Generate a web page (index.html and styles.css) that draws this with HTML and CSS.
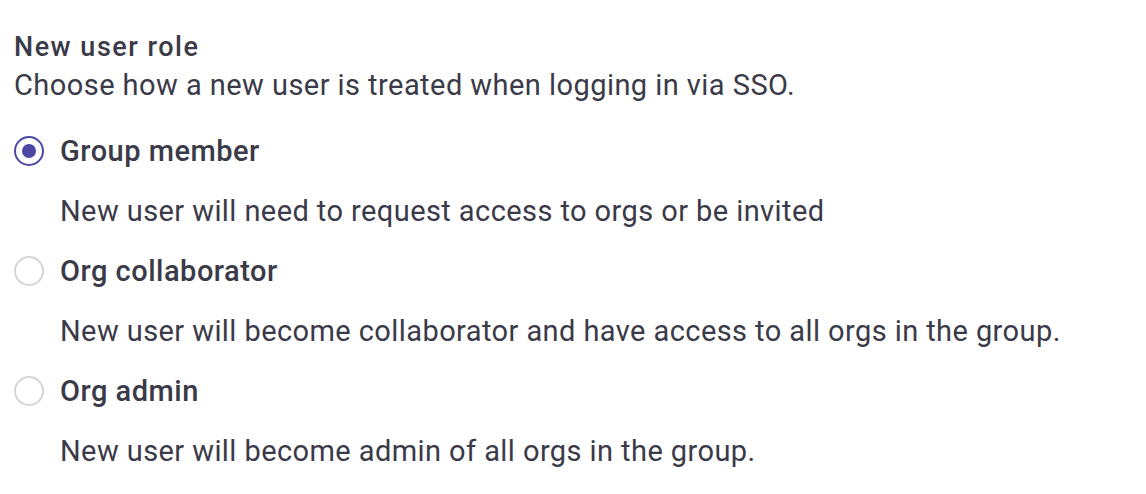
FILE: index.html
```html
<!DOCTYPE html>
<html>
<head>
<meta charset="utf-8">
<link rel="stylesheet" href="styles.css">
</head>
<body>
<div class="field">
  <div class="title">New user role</div>
  <div class="subtitle">Choose how a new user is treated when logging in via SSO.</div>
  <div class="options">
    <div class="option">
      <div class="row"><span class="radio checked"></span><span class="label">Group member</span></div>
      <div class="desc">New user will need to request access to orgs or be invited</div>
    </div>
    <div class="option">
      <div class="row"><span class="radio"></span><span class="label">Org collaborator</span></div>
      <div class="desc">New user will become collaborator and have access to all orgs in the group.</div>
    </div>
    <div class="option">
      <div class="row"><span class="radio"></span><span class="label">Org admin</span></div>
      <div class="desc">New user will become admin of all orgs in the group.</div>
    </div>
  </div>
</div>
</body>
</html>
```
FILE: styles.css
```css
html, body { margin: 0; padding: 0; background: #fff; }
body { font-family: Roboto, "Noto Sans", sans-serif; color: #3a3a48; }
.field { padding: 30px 14px 0 14px; display: flex; flex-direction: column; }
.title { font-size: 27px; font-weight: 500; line-height: 34px; letter-spacing: 1.5px; }
.subtitle { font-size: 29px; line-height: 42px; margin-bottom: 25px; letter-spacing: 0.45px; }
.options { display: flex; flex-direction: column; gap: 20px; }
.option { display: flex; flex-direction: column; gap: 20px; }
.row { display: flex; align-items: center; gap: 16px; height: 40px; }
.radio { width: 26px; height: 26px; border: 2px solid #d4d4da; border-radius: 50%; box-sizing: content-box; display: inline-block; position: relative; flex: none; }
.radio.checked { border-color: #4b47a4; }
.radio.checked::after { content: ""; position: absolute; left: 6px; top: 6px; width: 14px; height: 14px; border-radius: 50%; background: #4b47a4; }
.label { font-size: 29px; font-weight: 500; letter-spacing: 0.5px; }
.desc { font-size: 29px; line-height: 40px; padding-left: 46px; letter-spacing: 0.42px; }
```
